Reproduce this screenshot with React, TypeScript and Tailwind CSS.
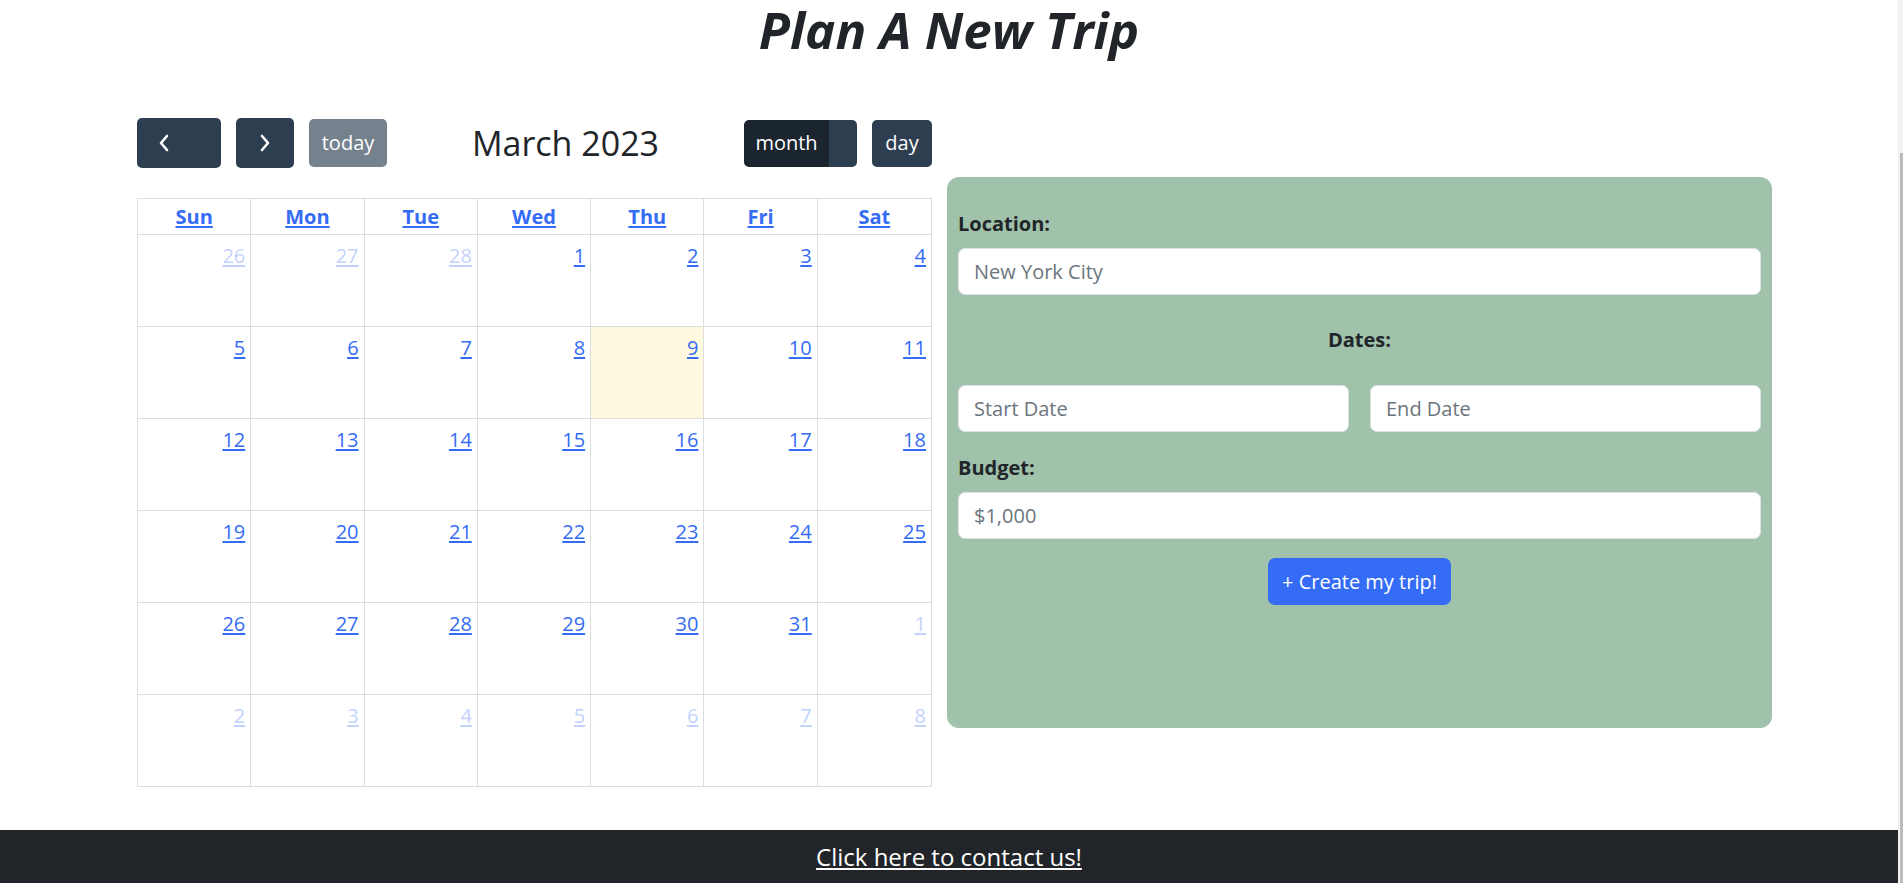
import { useLayoutEffect, useRef } from "react";

type Day = { n: number; other?: boolean; today?: boolean };

const weeks: Day[][] = [
  [{ n: 26, other: true }, { n: 27, other: true }, { n: 28, other: true }, { n: 1 }, { n: 2 }, { n: 3 }, { n: 4 }],
  [{ n: 5 }, { n: 6 }, { n: 7 }, { n: 8 }, { n: 9, today: true }, { n: 10 }, { n: 11 }],
  [{ n: 12 }, { n: 13 }, { n: 14 }, { n: 15 }, { n: 16 }, { n: 17 }, { n: 18 }],
  [{ n: 19 }, { n: 20 }, { n: 21 }, { n: 22 }, { n: 23 }, { n: 24 }, { n: 25 }],
  [{ n: 26 }, { n: 27 }, { n: 28 }, { n: 29 }, { n: 30 }, { n: 31 }, { n: 1, other: true }],
  [{ n: 2, other: true }, { n: 3, other: true }, { n: 4, other: true }, { n: 5, other: true }, { n: 6, other: true }, { n: 7, other: true }, { n: 8, other: true }],
];

const heads = ["Sun", "Mon", "Tue", "Wed", "Thu", "Fri", "Sat"];

function Chevron({ dir }: { dir: "left" | "right" }) {
  return (
    <svg width="14" height="20" viewBox="0 0 14 20" fill="none">
      <polyline
        points={dir === "left" ? "10,3 4,10 10,17" : "4,3 10,10 4,17"}
        stroke="white"
        strokeWidth="2.6"
        strokeLinecap="round"
        strokeLinejoin="round"
      />
    </svg>
  );
}

const inputCls =
  "block h-[47px] w-full rounded-[7px] border border-[#dee2e6] bg-white px-[15px] text-[20px] outline-none placeholder:text-[#6c757d]";

export default function App() {
  const ref = useRef<HTMLDivElement>(null);
  useLayoutEffect(() => {
    if (ref.current) ref.current.scrollTop = 185;
  }, []);

  return (
    <div className="relative h-screen w-full overflow-hidden bg-white">
      <div
        ref={ref}
        className="h-full w-[calc(100%-5px)] overflow-y-scroll font-['Open_Sans',sans-serif] text-[#212529] [scrollbar-width:none]"
      >
        <div className="h-[185px]" />
        <h1 className="h-[58px] text-center text-[51px] leading-[58px] font-bold italic">Plan A New Trip</h1>

        <div className="mt-[60px] flex items-start gap-[15px] pl-[137px]">
          {/* Calendar */}
          <div className="w-[795px]">
            <div className="mb-[30px] flex h-[50px] items-center justify-between">
              <div className="flex items-center gap-[15px]">
                <button className="flex h-[50px] w-[84px] items-center justify-start rounded-[5px] bg-[#2c3e50] pl-[20px]">
                  <Chevron dir="left" />
                </button>
                <button className="flex h-[50px] w-[58px] items-center justify-center rounded-[5px] bg-[#2c3e50]">
                  <Chevron dir="right" />
                </button>
                <button className="flex h-[48px] w-[78px] items-center justify-center rounded-[5px] bg-[#2c3e50] text-[20px] text-white opacity-65">
                  today
                </button>
              </div>
              <div className="text-[34px] leading-[50px] text-[#212529]">March 2023</div>
              <div className="flex items-center gap-[15px]">
                <div className="flex h-[47px] overflow-hidden rounded-[5px]">
                  <button className="flex h-full w-[85px] items-center justify-center bg-[#1a252f] text-[20px] text-white">
                    month
                  </button>
                  <button className="h-full w-[28px] bg-[#2c3e50]" />
                </div>
                <button className="flex h-[47px] w-[60px] items-center justify-center rounded-[5px] bg-[#2c3e50] text-[20px] text-white">
                  day
                </button>
              </div>
            </div>

            <div className="border border-[#dddddd]">
              <div className="grid grid-cols-7 border-b border-[#dddddd]">
                {heads.map((h) => (
                  <div
                    key={h}
                    className="flex h-[35px] items-center justify-center border-r border-[#dddddd] last:border-r-0"
                  >
                    <span className="text-[20px] font-bold text-[#346cf5] underline underline-offset-2">{h}</span>
                  </div>
                ))}
              </div>
              {weeks.map((w, i) => (
                <div key={i} className="grid grid-cols-7 border-b border-[#dddddd] last:border-b-0">
                  {w.map((d, j) => (
                    <div
                      key={j}
                      className={
                        "h-[91px] border-r border-[#dddddd] pt-[6px] pr-[5px] text-right last:border-r-0 " +
                        (d.today ? "bg-[#fff9e0]" : "")
                      }
                    >
                      <span
                        className={
                          "text-[20px] leading-[30px] text-[#346cf5] underline underline-offset-2 " +
                          (d.other ? "opacity-30" : "")
                        }
                      >
                        {d.n}
                      </span>
                    </div>
                  ))}
                </div>
              ))}
            </div>
          </div>

          {/* Form panel */}
          <div className="mt-[59px] h-[551px] w-[825px] rounded-[12px] bg-[#a0c2aa] px-[11px] pt-[32px]">
            <div className="mb-[9px] text-[20px] leading-[30px] font-bold">Location:</div>
            <input className={inputCls} placeholder="New York City" />
            <div className="mt-[30px] text-center text-[20px] leading-[30px] font-bold">Dates:</div>
            <div className="mt-[30px] grid grid-cols-2 gap-[21px]">
              <input className={inputCls} placeholder="Start Date" />
              <input className={inputCls} placeholder="End Date" />
            </div>
            <div className="mt-[21px] mb-[9px] text-[20px] leading-[30px] font-bold">Budget:</div>
            <input className={inputCls} placeholder="$1,000" />
            <div className="mt-[19px] flex justify-center">
              <button className="h-[47px] rounded-[7px] bg-[#346cf5] px-[14px] text-[20px] text-white">
                + Create my trip!
              </button>
            </div>
          </div>
        </div>

        <footer className="mt-[43px] flex h-[54px] items-center justify-center bg-[#212529]">
          <a className="text-[24px] leading-[32px] text-white underline underline-offset-2" href="#">
            Click here to contact us!
          </a>
        </footer>
      </div>

      {/* scrollbar overlay */}
      <div className="absolute top-0 right-0 h-full w-[5px] bg-[#f1f1f1]">
        <div className="absolute top-[153px] right-0 bottom-0 w-[3px] bg-[#bcbcbc]" />
      </div>
    </div>
  );
}
